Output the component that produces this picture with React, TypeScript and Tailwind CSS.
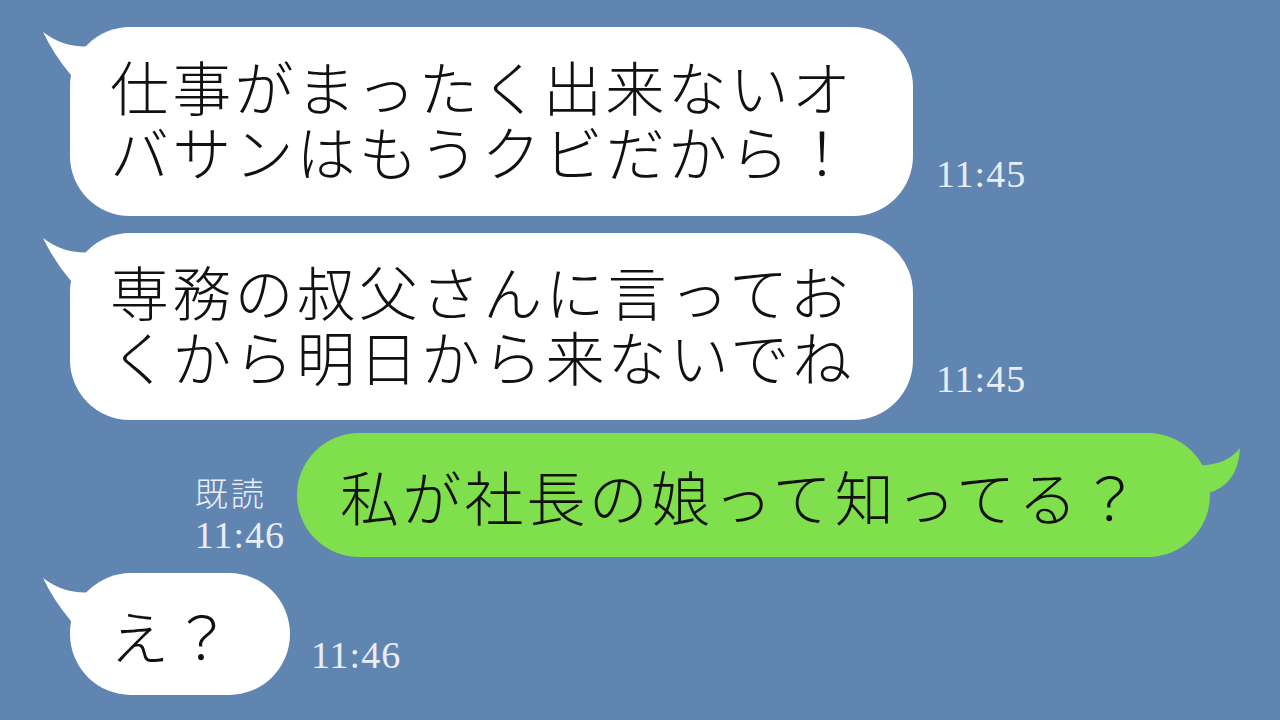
const JP = "font-['Noto_Sans_CJK_JP','Noto_Sans_CJK_SC',sans-serif]";
const MSG = `${JP} font-light text-[59px] leading-[65px] tracking-[3.2px] text-[#111] whitespace-nowrap`;
const TIME = "font-['Liberation_Serif',serif] text-[38px] leading-[38px] tracking-[1px] text-[#e9eef6] whitespace-nowrap";

function Tail() {
  return (
    <svg viewBox="0 0 70 64" className="absolute left-[-30px] top-0 w-[70px] h-[64px]">
      <path d="M3 5 Q25 22 53 19 L60 64 L30 64 L31 48 Q14 28 3 5 Z" fill="#ffffff" />
    </svg>
  );
}

function GreenTail() {
  return (
    <svg viewBox="0 0 80 80" className="absolute right-[-40px] top-0 w-[80px] h-[80px]">
      <path d="M70 15 Q55 34 25 32 L10 40 L10 62 L38 60 Q68 52 70 15 Z" fill="#80df4c" />
    </svg>
  );
}

function Time({ children, className = "" }: { children: string; className?: string }) {
  return <div className={`${TIME} ${className}`}>{children}</div>;
}

export default function App() {
  return (
    <div className="w-[1280px] h-[720px] overflow-hidden bg-[#6185b1] flex flex-col pt-[27px]">
      {/* incoming 1 */}
      <div className="flex items-end pl-[70px]">
        <div className="relative w-[843px] h-[189px] bg-white rounded-[60px] pl-[40px] pt-[26px]">
          <Tail />
          <p className={`relative ${MSG}`}>
            仕事がまったく出来ないオ
            <br />
            バサンはもうクビだから！
          </p>
        </div>
        <Time className="ml-[23px] mb-[23px]">11:45</Time>
      </div>

      {/* incoming 2 */}
      <div className="flex items-end pl-[70px] mt-[17px]">
        <div className="relative w-[843px] h-[187px] bg-white rounded-[60px] pl-[40px] pt-[25px]">
          <Tail />
          <p className={`relative ${MSG}`}>
            専務の叔父さんに言ってお
            <br />
            くから明日から来ないでね
          </p>
        </div>
        <Time className="ml-[23px] mb-[22px]">11:45</Time>
      </div>

      {/* outgoing */}
      <div className="flex items-end justify-end pr-[70px] mt-[13px]">
        <div className="flex flex-col mr-[12px] mb-[3px]">
          <div className={`${JP} font-light text-[33px] leading-[36px] tracking-[3px] text-[#e9eef6]`}>既読</div>
          <Time className="mt-[6px]">11:46</Time>
        </div>
        <div className="relative w-[913px] h-[124px] bg-[#80df4c] rounded-[62px] pl-[43px] flex items-center">
          <GreenTail />
          <p className={`relative ${MSG}`}>私が社長の娘って知ってる？</p>
        </div>
      </div>

      {/* incoming 3 */}
      <div className="flex items-end pl-[70px] mt-[16px]">
        <div className="relative w-[220px] h-[122px] bg-white rounded-[61px] pl-[40px] flex items-center">
          <Tail />
          <p className={`relative ${MSG}`}>え？</p>
        </div>
        <Time className="ml-[21px] mb-[21px]">11:46</Time>
      </div>
    </div>
  );
}
